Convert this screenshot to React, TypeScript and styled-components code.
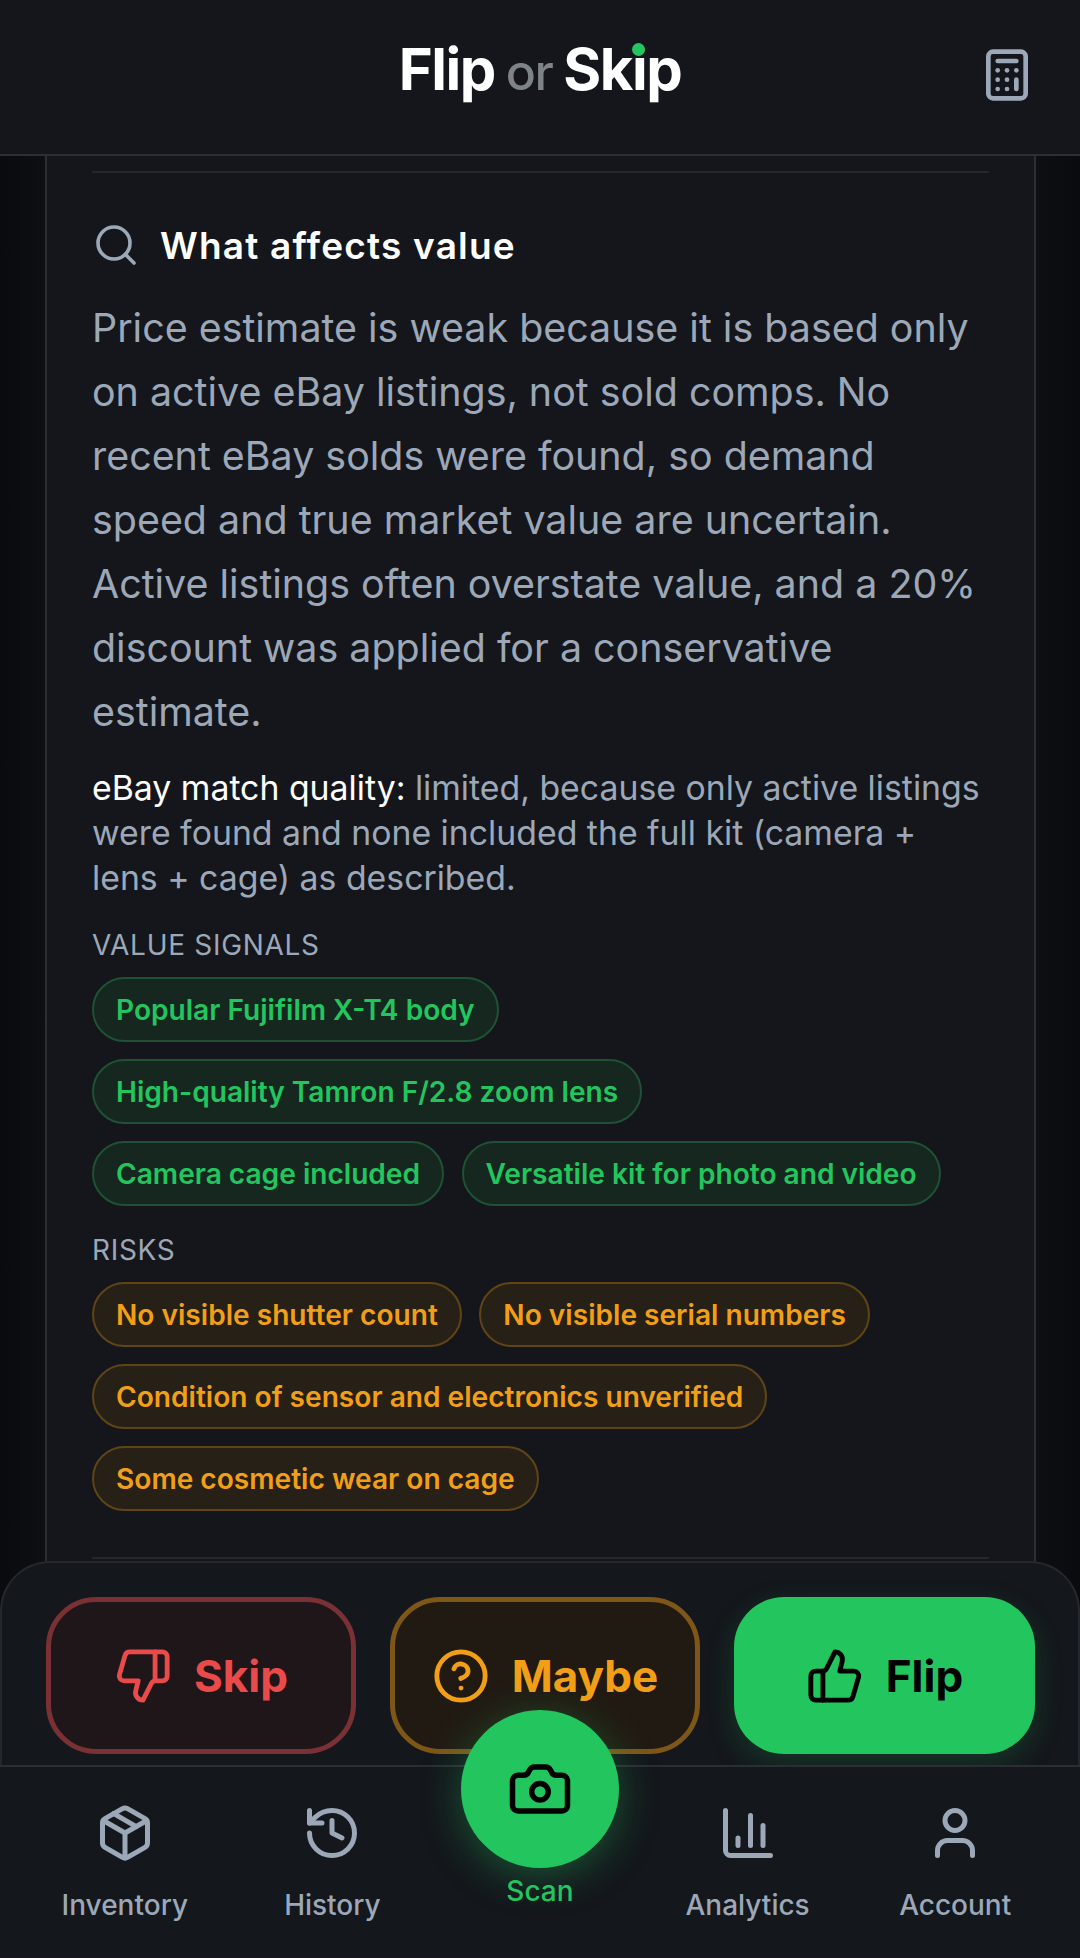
import styled, { createGlobalStyle } from "styled-components";
import {
  Calculator,
  Camera,
  ChartColumn,
  CircleHelp,
  History,
  Package,
  Search,
  ThumbsDown,
  ThumbsUp,
  User,
} from "lucide-react";

const GlobalStyle = createGlobalStyle`
  * { box-sizing: border-box; }
  html, body { margin: 0; padding: 0; background: #0b0d11; }
  body { font-family: Inter, "Liberation Sans", sans-serif; }
`;

const Page = styled.div`
  position: relative;
  width: 1080px;
  height: 1958px;
  overflow: hidden;
  display: flex;
  flex-direction: column;
  background: linear-gradient(90deg, #090b0e 0, #0d0f13 46px, #0d0f13 1034px, #090b0e 100%);
`;

const Header = styled.header`
  height: 156px;
  flex: none;
  display: grid;
  grid-template-columns: 1fr auto 1fr;
  align-items: center;
  padding: 0 45px 14px;
  background: #14161b;
  border-bottom: 2px solid #2b2e35;
  color: #9ca8b8;
`;

const Logo = styled.h1`
  grid-column: 2;
  margin: 0;
  display: flex;
  align-items: baseline;
  gap: 11px;
  font-size: 58px;
  line-height: 70px;
  font-weight: 700;
  letter-spacing: -1.5px;
  color: #fff;
`;

const LogoOr = styled.span`
  font-size: 50px;
  font-weight: 500;
  color: #7e8388;
`;

const LogoSkip = styled.span`
  position: relative;
  &::after {
    content: "";
    position: absolute;
    left: 69px;
    top: 9px;
    width: 13px;
    height: 13px;
    border-radius: 50%;
    background: #22c55e;
  }
`;

const HeaderAction = styled.div`
  justify-self: end;
  display: flex;
  margin-top: 10px;
`;

const Main = styled.main`
  flex: 1;
  padding: 0 44px 0 45px;
`;

const Card = styled.section`
  height: 100%;
  padding: 15px 45px 0;
  background: #14161b;
  border-left: 2px solid #2b2e35;
  border-right: 2px solid #2b2e35;
`;

const Divider = styled.div`
  height: 2px;
  background: #24272d;
`;

const SectionTitle = styled.div`
  display: flex;
  align-items: center;
  gap: 20px;
  margin-top: 44px;
  height: 56px;
  color: #9ca8b8;
`;

const SectionHeading = styled.h2`
  margin: 0;
  font-size: 37px;
  font-weight: 600;
  letter-spacing: 1.2px;
  color: #fff;
`;

const Lead = styled.p`
  margin: 23px 0 0;
  font-size: 39.4px;
  line-height: 64px;
  color: #9ca8b8;
`;

const Note = styled.p`
  margin: 21px 0 0;
  font-size: 33.8px;
  line-height: 45px;
  color: #9ca8b8;
`;

const NoteLabel = styled.span`
  color: #fff;
`;

const GroupLabel = styled.div<{ $top: number }>`
  margin-top: ${(p) => p.$top}px;
  font-size: 28px;
  line-height: 36px;
  letter-spacing: 0.7px;
  color: #9ca8b8;
`;

const ChipRow = styled.div`
  display: flex;
  flex-wrap: wrap;
  gap: 17px 17.5px;
  margin-top: 14px;
`;

const Chip = styled.span<{ $tone: "good" | "risk" }>`
  height: 65px;
  display: flex;
  align-items: center;
  padding: 0 22px;
  border-radius: 33px;
  font-size: 28.1px;
  font-weight: 600;
  color: ${(p) => (p.$tone === "good" ? "#22c55e" : "#f29f18")};
  background: ${(p) => (p.$tone === "good" ? "#15271e" : "#272016")};
  border: 2px solid ${(p) => (p.$tone === "good" ? "#1f5234" : "#5f4516")};
`;

const BottomDivider = styled(Divider)`
  margin-top: 46px;
`;

const Dock = styled.div`
  position: absolute;
  left: 0;
  right: 0;
  bottom: 0;
`;

const ActionPanel = styled.div`
  height: 204px;
  display: grid;
  grid-template-columns: 310px 310px 301px;
  justify-content: space-between;
  padding: 34px 43px 0 44px;
  background: #14171c;
  border: 2px solid #24272e;
  border-bottom: none;
  border-radius: 50px 50px 0 0;
`;

const ActionButton = styled.button<{ $kind: "skip" | "maybe" | "flip" }>`
  height: 157px;
  display: flex;
  align-items: center;
  justify-content: center;
  gap: 22px;
  padding: 0;
  border-radius: 50px;
  font-family: Inter, "Liberation Sans", sans-serif;
  font-size: 44px;
  font-weight: 700;
  color: ${(p) => ({ skip: "#e94a4a", maybe: "#f29f18", flip: "#000" })[p.$kind]};
  background: ${(p) => ({ skip: "#1f161a", maybe: "#211a13", flip: "#22c55e" })[p.$kind]};
  border: ${(p) => ({ skip: "5px solid #7a3135", maybe: "5px solid #7d5618", flip: "none" })[p.$kind]};
  box-shadow: ${(p) => (p.$kind === "flip" ? "0 10px 30px rgba(34, 197, 94, 0.18)" : "none")};
`;

const Nav = styled.nav`
  position: relative;
  height: 193px;
  display: grid;
  grid-template-columns: repeat(5, 207.6px);
  padding: 36px 21px 0;
  background: #14171c;
  border-top: 2px solid #2b2e35;
`;

const NavItem = styled.div`
  display: flex;
  flex-direction: column;
  align-items: center;
  gap: 24px;
  font-size: 28px;
  line-height: 36px;
  font-weight: 500;
  color: #9ca8b8;
`;

const ScanItem = styled(NavItem)`
  gap: 5px;
  margin-top: -93px;
  color: #22c55e;
`;

const ScanCircle = styled.div`
  width: 158px;
  height: 158px;
  flex: none;
  display: flex;
  align-items: center;
  justify-content: center;
  border-radius: 50%;
  background: #22c55e;
  color: #000;
  box-shadow: 0 8px 40px rgba(34, 197, 94, 0.35);
`;

const goodSignals = [
  "Popular Fujifilm X-T4 body",
  "High-quality Tamron F/2.8 zoom lens",
  "Camera cage included",
  "Versatile kit for photo and video",
];

const risks = [
  "No visible shutter count",
  "No visible serial numbers",
  "Condition of sensor and electronics unverified",
  "Some cosmetic wear on cage",
];

export default function App() {
  return (
    <Page>
      <GlobalStyle />
      <Header>
        <Logo>
          <span>Flip</span>
          <LogoOr>or</LogoOr>
          <LogoSkip>Skip</LogoSkip>
        </Logo>
        <HeaderAction>
          <Calculator size={56} strokeWidth={2} />
        </HeaderAction>
      </Header>

      <Main>
        <Card>
          <Divider />
          <SectionTitle>
            <Search size={48} strokeWidth={1.8} />
            <SectionHeading>What affects value</SectionHeading>
          </SectionTitle>
          <Lead>
            Price estimate is weak because it is based only on active eBay listings, not sold comps.
            No recent eBay solds were found, so demand speed and true market value are uncertain.
            Active listings often overstate value, and a 20% discount was applied for a conservative
            estimate.
          </Lead>
          <Note>
            <NoteLabel>eBay match quality:</NoteLabel> limited, because only active listings were
            found and none included the full kit (camera + lens + cage) as described.
          </Note>
          <GroupLabel $top={27}>VALUE SIGNALS</GroupLabel>
          <ChipRow>
            {goodSignals.map((s) => (
              <Chip key={s} $tone="good">{s}</Chip>
            ))}
          </ChipRow>
          <GroupLabel $top={26}>RISKS</GroupLabel>
          <ChipRow>
            {risks.map((s) => (
              <Chip key={s} $tone="risk">{s}</Chip>
            ))}
          </ChipRow>
          <BottomDivider />
        </Card>
      </Main>

      <Dock>
        <ActionPanel>
          <ActionButton $kind="skip">
            <ThumbsDown size={58} strokeWidth={2} />
            Skip
          </ActionButton>
          <ActionButton $kind="maybe">
            <CircleHelp size={58} strokeWidth={2} />
            Maybe
          </ActionButton>
          <ActionButton $kind="flip">
            <ThumbsUp size={58} strokeWidth={2} />
            Flip
          </ActionButton>
        </ActionPanel>
        <Nav>
          <NavItem>
            <Package size={60} strokeWidth={2} />
            Inventory
          </NavItem>
          <NavItem>
            <History size={60} strokeWidth={2} />
            History
          </NavItem>
          <ScanItem>
            <ScanCircle>
              <Camera size={66} strokeWidth={2} />
            </ScanCircle>
            Scan
          </ScanItem>
          <NavItem>
            <ChartColumn size={60} strokeWidth={2} />
            Analytics
          </NavItem>
          <NavItem>
            <User size={60} strokeWidth={2} />
            Account
          </NavItem>
        </Nav>
      </Dock>
    </Page>
  );
}
